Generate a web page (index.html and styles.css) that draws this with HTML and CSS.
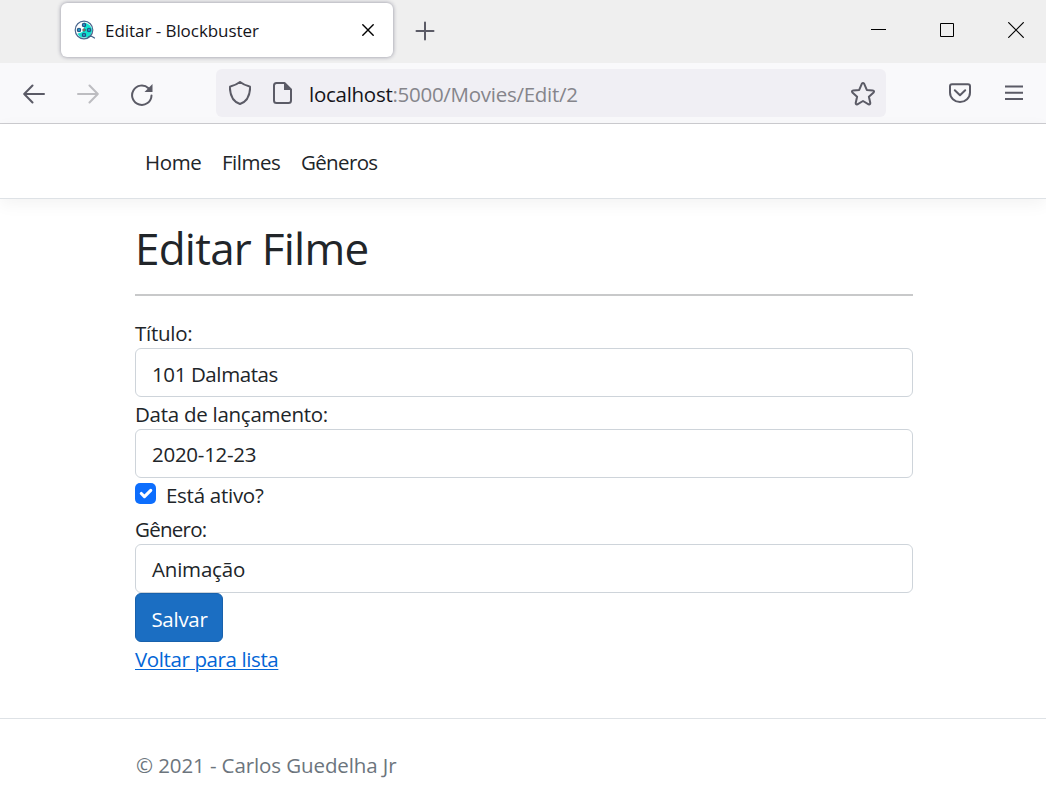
FILE: index.html
```html
<!DOCTYPE html>
<html lang="pt-BR">
<head>
<meta charset="utf-8">
<title>Editar - Blockbuster</title>
<link rel="stylesheet" href="styles.css">
</head>
<body>
<div class="tabbar">
  <div class="tab">
    <svg class="favicon" width="22" height="20" viewBox="0 0 22 20"><circle cx="10" cy="10" r="8.800" fill="#fff"/><path d="M10 2.500q3.500.500 5.500 2.500 2.800 2.500 2.500 6-.500 4-4 6.500H7.500q-3-1-4-4 5-.500 6.500-4Z" fill="#12e3cf"/><circle cx="10" cy="10" r="8.800" fill="none" stroke="#4a678e" stroke-width="1.200"/><g fill="#2196c8" stroke="#24517f" stroke-width="1.100"><circle cx="10" cy="5" r="1.700"/><circle cx="5" cy="10" r="1.700"/><circle cx="15" cy="10" r="1.700"/><circle cx="10" cy="15" r="1.700"/></g><circle cx="10" cy="10" r="1.300" fill="#c98a3c" stroke="#24517f" stroke-width=".6"/><path d="M14 17.500q2.500-2 4-1l2.500 1.500" fill="none" stroke="#3e5f86" stroke-width="1.200"/></svg>
    <span class="tab-title">Editar - Blockbuster</span>
    <svg class="tab-close" width="12" height="12" viewBox="0 0 12 12"><path d="M.8.8l10.400 10.400M11.200.8L.8 11.200"/></svg>
  </div>
  <svg class="new-tab" width="20" height="20" viewBox="0 0 20 20"><path d="M10 1.500v17M1.500 10h17"/></svg>
  <div class="window-controls">
    <svg width="15" height="16" viewBox="0 0 15 16"><path d="M0 7.500h15"/></svg>
    <svg width="14" height="14" viewBox="0 0 14 14"><path d="M.5.5h13v13H.5Z"/></svg>
    <svg width="16" height="16" viewBox="0 0 16 16"><path class="cross" d="M.3.300l15.400 15.400M15.700.3L.3 15.700"/></svg>
  </div>
</div>
<div class="toolbar">
  <svg class="back" width="22" height="20" viewBox="0 0 22 20"><path d="M21 10H1.500M9.500 1.500L1.200 10l8.300 8.500"/></svg>
  <svg class="forward" width="22" height="20" viewBox="0 0 22 20"><path d="M1 10h19.500M12.500 1.500l8.300 8.500-8.300 8.500"/></svg>
  <svg class="reload" width="22" height="22" viewBox="0 0 22 22"><path d="M20.500 11.500A9.700 9.700 0 1 1 17.500 4.200"/><path class="solid" d="M21.500 0v8h-8Z"/></svg>
  <div class="urlbar">
    <svg class="shield" width="22" height="24" viewBox="0 0 22 24"><path d="M11 1q4 3 9 4.300c1 0 1.200.8 1.100 1.700C20.800 15 18 20.500 11 23 4 20.500 1.200 15 .9 7c-.1-.9.100-1.700 1.100-1.700Q7 4 11 1Z"/></svg>
    <svg class="page" width="19" height="22" viewBox="0 0 19 22"><path d="M3.500 1h8l6.500 6.500v11q0 2.500-2.500 2.500h-12Q1 21 1 18.500v-15Q1 1 3.500 1Z"/><path class="solid" d="M11 1v7h7Z"/></svg>
    <span class="url">localhost<span class="path">:5000/Movies/Edit/2</span></span>
    <svg class="star" width="24" height="24" viewBox="0 0 24 24"><path d="M10.900 1.700q1.100-1.400 2.200 0l2.700 6.200 6 .6q1.900.3.800 1.900l-4.700 4.300 1.400 6.300q0 1.900-1.700 1.300L12 19l-5.600 3.300q-1.700.6-1.700-1.300l1.400-6.300-4.700-4.300Q.3 8.800 2.200 8.500l6-.6Z"/></svg>
  </div>
  <svg class="pocket" width="22" height="20" viewBox="0 0 22 20"><path d="M3 1.200h16q2 0 2 2V9.500a10 9.500 0 0 1-20 0V3.200q0-2 2-2ZM5.800 7.200 11 12.200l5.200-5"/></svg>
  <svg class="menu" width="18" height="16" viewBox="0 0 18 16"><path d="M0 1.500h18M0 7.800h18M0 14h18"/></svg>
</div>
<nav class="navbar">
  <a class="nav-home">Home</a><a class="nav-movies">Filmes</a><a class="nav-genres">Gêneros</a>
</nav>
<main class="content">
  <h1>Editar Filme</h1>
  <form>
    <label class="title-label">Título:</label>
    <div class="field movie-title">101 Dalmatas</div>
    <label class="date-label">Data de lançamento:</label>
    <div class="field date">2020-12-23</div>
    <div class="check-row">
      <span class="checkbox"><svg width="21" height="21" viewBox="0 0 20 20"><path d="M6 10l3 3 6-6"/></svg></span>
      <span class="check-label">Está ativo?</span>
    </div>
    <label class="genre-label">Gênero:</label>
    <div class="field genre">Animação</div>
    <button type="button" class="save">Salvar</button>
  </form>
  <a class="back-link" href="#">Voltar para lista</a>
</main>
<footer><span>© 2021 - Carlos Guedelha Jr</span></footer>
</body>
</html>
```
FILE: styles.css
```css
* { box-sizing: border-box; }
body { margin: 0; height: 807px; overflow: hidden; background: #fff; color: #212529; font: 20.5px/32px "Open Sans", "Noto Sans", sans-serif; letter-spacing: -.27px; }
svg { display: block; flex: none; fill: none; stroke: #5b5b66; stroke-width: 2; stroke-linecap: round; stroke-linejoin: round; }
.solid { fill: #5b5b66; stroke: none; }
.tabbar { display: flex; align-items: center; height: 63px; padding: 0 22px 3px 61px; background: #efefef; }
.tab { display: flex; align-items: center; width: 332px; height: 54px; padding: 0 19px 0 13px; border-radius: 6px; background: #fff; box-shadow: 0 0 4px #8f8f9d; }
.favicon { stroke: none; margin-right: 9px; }
.tab-title { padding-top: 1px; font-size: 17px; letter-spacing: -.05px; color: #15141a; flex: 1; white-space: nowrap; }
.tab-close { stroke: #000; stroke-width: 1.400; }
.new-tab { margin: 2px 0 0 22px; }
.window-controls { display: flex; align-items: center; margin-left: auto; }
.window-controls svg { stroke: #000; stroke-width: 1; stroke-linecap: butt; stroke-linejoin: miter; }
.window-controls .cross { stroke-width: 1.200; }
.window-controls svg + svg { margin-left: 54px; }
.toolbar { display: flex; align-items: center; height: 61px; padding: 0 23px; background: #f9f9fb; border-bottom: 1px solid #ccccd0; }
.back, .forward { margin-top: 2px; }
.forward { stroke: #bdbdc1; margin-left: 32px; }
.reload { margin: 4px 0 0 32px; }
.urlbar { display: flex; align-items: center; width: 670px; height: 48px; margin-left: 63px; padding: 0 11px 0 13px; border-radius: 6px; background: #f0eff4; }
.page { margin-left: 22px; }
.star { margin-top: 1px; }
.url { margin-left: 17px; padding-top: 2px; flex: 1; color: #15141a; white-space: nowrap; }
.path { color: #85858b; }
.pocket { margin-left: 63px; }
.menu { margin-left: 34px; }
.navbar { display: flex; align-items: center; height: 75px; padding: 1px 0 0 145px; border-bottom: 1px solid #dee2e6; box-shadow: 0 5px 16px rgba(0,0,0,.05); }
.nav-home { width: 77px; letter-spacing: -.4px; }
.nav-movies { width: 79px; letter-spacing: -.5px; }
.nav-genres { letter-spacing: -.65px; }
.content { display: flex; flex-direction: column; height: 519px; padding: 0 133px 0 135px; }
h1 { margin: 0 0 20px; height: 97px; padding-top: 19px; border-bottom: 2px solid #c8c9ca; font-size: 44px; letter-spacing: -.75px; font-weight: 400; line-height: 60px; }
form { display: flex; flex-direction: column; }
label { height: 32px; line-height: 34px; white-space: nowrap; }
.field { height: 49px; padding: 0 16px; border: 1px solid #ced4da; border-radius: 6px; line-height: 50px; }
.movie-title { letter-spacing: -.4px; }
.genre-label { letter-spacing: -.75px; }
.date, .genre { line-height: 48px; }
.genre { letter-spacing: -.2px; }
.check-row { display: flex; align-items: flex-start; height: 34px; padding-top: 5px; }
.checkbox { width: 21px; height: 21px; border-radius: 5px; background: #0d6efd; }
.checkbox svg { stroke: #fff; stroke-width: 3; }
.check-label { margin: -4px 0 0 10px; }
.save { align-self: flex-start; width: 88px; height: 49px; padding: 2px 0 0 1px; border: 1px solid #1861ac; border-radius: 6px; background: #1b6ec2; color: #fff; font: inherit; letter-spacing: inherit; }
.back-link { align-self: flex-start; margin-top: 1px; color: #0366d6; letter-spacing: -.39px; text-decoration-thickness: 1px; text-underline-offset: 2px; white-space: nowrap; }
footer { height: 89px; padding: 30px 136px; border-top: 1px solid #dee2e6; color: #6c757d; letter-spacing: -.1px; }
```
